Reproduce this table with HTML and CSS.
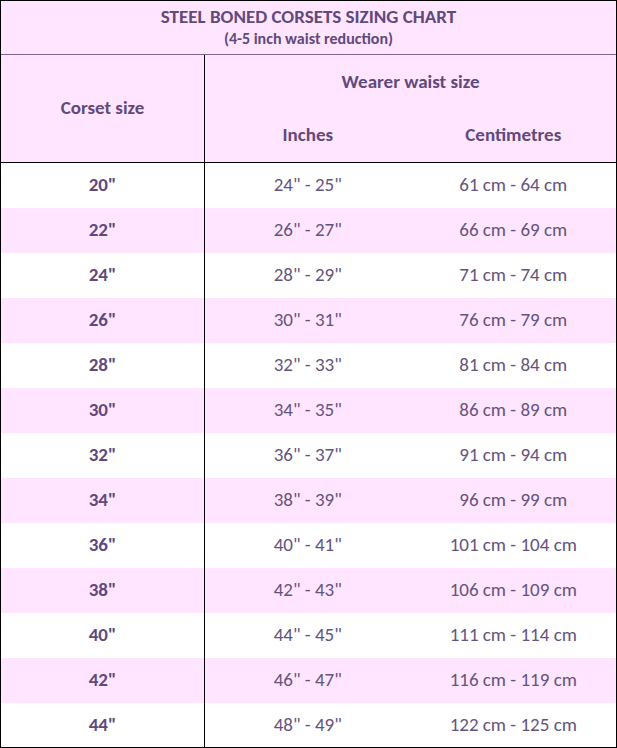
FILE: index.html
```html
<!DOCTYPE html>
<html>
<head>
<meta charset="utf-8">
<link rel="stylesheet" href="styles.css">
</head>
<body>
<div class="chart">
  <div class="title">
    <div class="t1">STEEL BONED CORSETS SIZING CHART</div>
    <div class="t2">(4-5 inch waist reduction)</div>
  </div>
  <div class="head">
    <div class="hsize">Corset size</div>
    <div class="hwaist">
      <div class="hw1">Wearer waist size</div>
      <div class="hsub"><span>Inches</span><span>Centimetres</span></div>
    </div>
  </div>
  <div class="rows">
    <div class="row"><div class="c1">20"</div><div class="c2">24" - 25"</div><div class="c3">61 cm - 64 cm</div></div>
    <div class="row pink"><div class="c1">22"</div><div class="c2">26" - 27"</div><div class="c3">66 cm - 69 cm</div></div>
    <div class="row"><div class="c1">24"</div><div class="c2">28" - 29"</div><div class="c3">71 cm - 74 cm</div></div>
    <div class="row pink"><div class="c1">26"</div><div class="c2">30" - 31"</div><div class="c3">76 cm - 79 cm</div></div>
    <div class="row"><div class="c1">28"</div><div class="c2">32" - 33"</div><div class="c3">81 cm - 84 cm</div></div>
    <div class="row pink"><div class="c1">30"</div><div class="c2">34" - 35"</div><div class="c3">86 cm - 89 cm</div></div>
    <div class="row"><div class="c1">32"</div><div class="c2">36" - 37"</div><div class="c3">91 cm - 94 cm</div></div>
    <div class="row pink"><div class="c1">34"</div><div class="c2">38" - 39"</div><div class="c3">96 cm - 99 cm</div></div>
    <div class="row"><div class="c1">36"</div><div class="c2">40" - 41"</div><div class="c3">101 cm - 104 cm</div></div>
    <div class="row pink"><div class="c1">38"</div><div class="c2">42" - 43"</div><div class="c3">106 cm - 109 cm</div></div>
    <div class="row"><div class="c1">40"</div><div class="c2">44" - 45"</div><div class="c3">111 cm - 114 cm</div></div>
    <div class="row pink"><div class="c1">42"</div><div class="c2">46" - 47"</div><div class="c3">116 cm - 119 cm</div></div>
    <div class="row last"><div class="c1">44"</div><div class="c2">48" - 49"</div><div class="c3">122 cm - 125 cm</div></div>
  </div>
</div>
</body>
</html>
```
FILE: styles.css
```css
html, body { margin: 0; padding: 0; background: #ffffff; }
.chart {
  width: 615px;
  height: 746px;
  border: 1px solid #000;
  border-right-width: 2px;
  font-family: Carlito, Lato, "Open Sans", sans-serif;
  color: #5f4a7b;
  overflow: hidden;
}
.title {
  height: 53px;
  background: #ffe5ff;
  border-bottom: 1px solid #7a6690;
  display: flex;
  flex-direction: column;
  align-items: center;
  font-weight: bold;
}
.t1 { font-size: 19px; margin-top: 5px; line-height: 22px; }
.t2 { font-size: 16px; line-height: 18px; margin-top: 2px; }
.head {
  height: 107px;
  background: #ffe5ff;
  border-bottom: 1px solid #000;
  display: grid;
  grid-template-columns: 204px 1fr;
  font-weight: bold;
  font-size: 19px;
}
.hsize {
  border-right: 1px solid #000;
  display: flex;
  align-items: center;
  justify-content: center;
  padding-bottom: 3px;
}
.hwaist { display: flex; flex-direction: column; }
.hw1 { text-align: center; margin-top: 16px; line-height: 22px; }
.hsub {
  display: grid;
  grid-template-columns: 1fr 1fr;
  margin-top: 31px;
  line-height: 22px;
  text-align: center;
}
.row {
  height: 45px;
  display: grid;
  grid-template-columns: 204px 1fr 1fr;
  font-size: 19px;
}
.row.last { height: 44px; }
.row.pink { background: #ffe5ff; }
.row > div { display: flex; align-items: center; justify-content: center; padding-bottom: 2px; }
.c1 { font-weight: bold; border-right: 1px solid #000; }
.c2, .c3 { color: #64547d; }
```
